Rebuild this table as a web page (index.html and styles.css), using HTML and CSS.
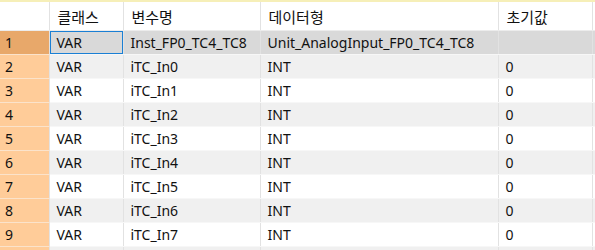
FILE: index.html
```html
<!DOCTYPE html>
<html lang="ko">
<head>
    <meta charset="UTF-8">
    <title>변수 테이블</title>
    <link rel="stylesheet" href="styles.css">
</head>
<body>
    <div class="top-strip"></div>
    <table class="var-grid">
        <colgroup>
            <col class="c-num">
            <col class="c-class">
            <col class="c-name">
            <col class="c-type">
            <col class="c-init">
            <col class="c-rest">
        </colgroup>
        <thead>
            <tr>
                <th class="num"></th>
                <th>클래스</th>
                <th>변수명</th>
                <th>데이터형</th>
                <th>초기값</th>
                <th class="rest"></th>
            </tr>
        </thead>
        <tbody>
            <tr class="selected">
                <td class="num">1</td>
                <td class="current">VAR</td>
                <td>Inst_FP0_TC4_TC8</td>
                <td>Unit_AnalogInput_FP0_TC4_TC8</td>
                <td></td>
                <td class="rest"></td>
            </tr>
            <tr>
                <td class="num">2</td><td>VAR</td><td>iTC_In0</td><td>INT</td><td>0</td><td class="rest"></td>
            </tr>
            <tr>
                <td class="num">3</td><td>VAR</td><td>iTC_In1</td><td>INT</td><td>0</td><td class="rest"></td>
            </tr>
            <tr>
                <td class="num">4</td><td>VAR</td><td>iTC_In2</td><td>INT</td><td>0</td><td class="rest"></td>
            </tr>
            <tr>
                <td class="num">5</td><td>VAR</td><td>iTC_In3</td><td>INT</td><td>0</td><td class="rest"></td>
            </tr>
            <tr>
                <td class="num">6</td><td>VAR</td><td>iTC_In4</td><td>INT</td><td>0</td><td class="rest"></td>
            </tr>
            <tr>
                <td class="num">7</td><td>VAR</td><td>iTC_In5</td><td>INT</td><td>0</td><td class="rest"></td>
            </tr>
            <tr>
                <td class="num">8</td><td>VAR</td><td>iTC_In6</td><td>INT</td><td>0</td><td class="rest"></td>
            </tr>
            <tr>
                <td class="num">9</td><td>VAR</td><td>iTC_In7</td><td>INT</td><td>0</td><td class="rest"></td>
            </tr>
            <tr>
                <td class="num"></td><td></td><td></td><td></td><td></td><td class="rest"></td>
            </tr>
        </tbody>
    </table>
</body>
</html>
```

FILE: styles.css
```css
:root {
    --row-head: #ffcc99;
    --row-head-sel: #e8a86a;
    --row-sel: #d9d9d9;
    --row-alt: #f0f0f0;
    --grid-line: #e2e2e2;
    --text: #111111;
}

body {
    margin: 0;
    background: #ffffff;
    font-family: 'Noto Sans', 'Noto Sans CJK KR', sans-serif;
    font-size: 14px;
    color: var(--text);
    overflow: hidden;
}

.top-strip {
    height: 2px;
    background: #f6efb8;
}

.var-grid {
    border-collapse: collapse;
    table-layout: fixed;
    width: 600px;
}

.c-num { width: 49px; }
.c-class { width: 74px; }
.c-name { width: 137px; }
.c-type { width: 238px; }
.c-init { width: 94px; }
.c-rest { width: 8px; }

.var-grid th,
.var-grid td {
    padding: 0 0 0 7px;
    text-align: left;
    white-space: nowrap;
    overflow: hidden;
    border-right: 1px solid var(--grid-line);
    border-bottom: 1px solid #f7f7f7;
}

.var-grid th {
    height: 28px;
    font-weight: normal;
    font-family: 'Noto Sans CJK KR', sans-serif;
    font-size: 15px;
    padding-left: 8px;
    border-bottom-color: #ececec;
}

.var-grid td {
    height: 23px;
}

.var-grid td.num {
    padding-left: 5px;
    background: var(--row-head);
    border-bottom-color: #fbe3cb;
}

.var-grid .rest {
    border-right: none;
}

.var-grid tbody tr:nth-child(even) td {
    background-color: var(--row-alt);
}

.var-grid tbody tr:nth-child(even) td.num {
    background-color: var(--row-head);
}

.var-grid tr.selected td {
    background: var(--row-sel);
}

.var-grid tr.selected td.num {
    background: var(--row-head-sel);
}

.var-grid td.current {
    box-shadow: inset 0 0 0 1px #1a7fd4;
}
```
